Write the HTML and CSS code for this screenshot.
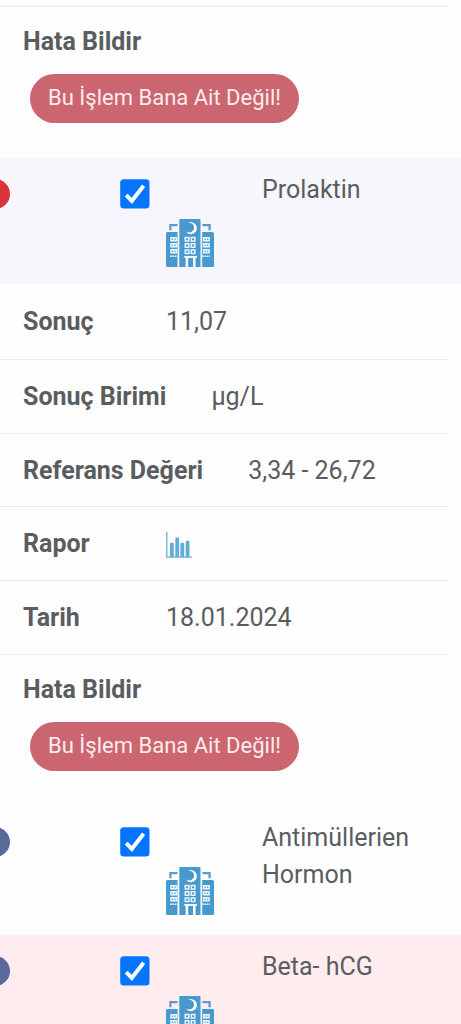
FILE: index.html
```html
<!DOCTYPE html>
<html lang="tr">
<head>
<meta charset="utf-8">
<meta name="viewport" content="width=device-width, initial-scale=1">
<title>Tahliller</title>
<link rel="stylesheet" href="styles.css">
</head>
<body>
<svg class="defs" width="0" height="0" aria-hidden="true">
  <symbol id="check" viewBox="0 0 30 30">
    <rect x=".2" y=".2" width="29.3" height="29.4" rx="3.6" fill="#0575ff"/>
    <path d="M6.2 16.2 11.8 22 23.6 6.8" fill="none" stroke="#fff" stroke-width="4"/>
  </symbol>
  <symbol id="hospital" viewBox="0 0 48 48">
    <g fill="#4799ce">
      <path d="M13.3 1.2Q13.3 0 14.5 0H33.3Q34.5 0 34.5 1.2V48H29.6V38.7H31V37H18.3V38.7H19.6V48H13.3Z"/>
      <path d="M22.2 39H27V48H22.2Z"/>
      <path d="M0 14.5Q0 13 1.5 13H11.5V48H1.5Q0 48 0 46.5Z"/>
      <path d="M36.2 13H46.5Q48 13 48 14.5V46.5Q48 48 46.5 48H36.2Z"/>
    </g>
    <path d="M4.4 11.3V6.2H11.5M43.6 11.3V6.2H36.4" fill="none" stroke="#5d9cc8" stroke-width="2.3"/>
    <path d="M22.2 3.8A6 6 0 1 1 19.8 12.2A4.9 4.9 0 1 0 22.2 3.8Z" fill="#fff"/>
    <g fill="#4799ce" stroke="#eef8ff" stroke-width="1.5">
      <path d="M19.3 18.6h3.5v3.5h-3.5zM25.3 18.6h3.5v3.5h-3.5zM19.3 24.8h3.5v3.5h-3.5zM25.3 24.8h3.5v3.5h-3.5zM19.3 31h3.5v3.5h-3.5zM25.3 31h3.5v3.5h-3.5z"/>
      <path d="M5 18.8h2.7v3H5zM7.7 18.8h2.7v3H7.7zM5 24.8h2.7v3H5zM7.7 24.8h2.7v3H7.7zM5 30.8h2.7v3H5zM7.7 30.8h2.7v3H7.7z"/>
      <path d="M37.7 18.8h2.7v3h-2.7zM40.4 18.8h2.7v3h-2.7zM37.7 24.8h2.7v3h-2.7zM40.4 24.8h2.7v3h-2.7zM37.7 30.8h2.7v3h-2.7zM40.4 30.8h2.7v3h-2.7z"/>
    </g>
    <path d="M4.2 37.2h7.3M36.3 37.2h7.6" stroke="#eef8ff" stroke-width="1.5" stroke-dasharray="1.6 .6"/>
  </symbol>
</svg>
<main class="results">
  <div class="top-edge"></div>
  <section class="report">
    <h2 class="label">Hata Bildir</h2>
    <button class="report-btn" type="button">Bu İşlem Bana Ait Değil!</button>
  </section>

  <div class="test test-shaded">
    <span class="dot dot-red"></span>
    <svg class="check"><use href="#check"/></svg>
    <svg class="hospital"><use href="#hospital"/></svg>
    <span class="name">Prolaktin</span>
  </div>

  <div class="field field-first"><span class="label">Sonuç</span><span class="value">11,07</span></div>
  <div class="field"><span class="label">Sonuç Birimi</span><span class="value value-unit">µg/L</span></div>
  <div class="field field-short"><span class="label">Referans Değeri</span><span class="value value-range">3,34 - 26,72</span></div>
  <div class="field"><span class="label">Rapor</span>
    <svg class="chart" viewBox="0 0 26 26">
      <path d="M.8 0V25.2H26" fill="none" stroke="#70add6" stroke-width="1.3"/>
      <path d="M4 25V12.2Q4 10.8 5.4 10.8H6.4Q7.8 10.8 7.8 12.2V25ZM9.3 25V7Q9.3 5.6 10.7 5.6H11.7Q13.1 5.6 13.1 7V25ZM14.4 25V12.2Q14.4 10.8 15.8 10.8H16.8Q18.2 10.8 18.2 12.2V25ZM19.7 25V10.2Q19.7 8.8 21.1 8.8H22.1Q23.5 8.8 23.5 10.2V25Z" fill="#63abd9"/>
    </svg>
  </div>
  <div class="field"><span class="label">Tarih</span><span class="value">18.01.2024</span></div>

  <section class="report">
    <h2 class="label">Hata Bildir</h2>
    <button class="report-btn" type="button">Bu İşlem Bana Ait Değil!</button>
  </section>

  <div class="test test-plain">
    <span class="dot"></span>
    <svg class="check"><use href="#check"/></svg>
    <svg class="hospital"><use href="#hospital"/></svg>
    <span class="name">Antimüllerien Hormon</span>
  </div>
  <div class="test test-alert">
    <span class="dot"></span>
    <svg class="check"><use href="#check"/></svg>
    <svg class="hospital"><use href="#hospital"/></svg>
    <span class="name">Beta- hCG</span>
  </div>
</main>
</body>
</html>
```
FILE: styles.css
```css
* { box-sizing: border-box; }
html, body { overflow: hidden; }
body {
  margin: 0;
  background: #fefefe;
  color: #5a5d60;
  font-family: Roboto, "Noto Sans", sans-serif;
  font-size: 25px;
  line-height: 37px;
}
.defs { display: block; }
.results { height: 1024px; overflow: hidden; }
.top-edge {
  width: 448px;
  height: 7px;
  border-bottom: 2px solid #f1f1f2;
}
.label {
  margin: 0;
  font-size: 25px;
  font-weight: 700;
  letter-spacing: 0;
}
.report {
  height: 151px;
  padding: 16px 0 0 23px;
}
.report-btn {
  display: block;
  width: 269px;
  height: 49px;
  margin: 14px 0 0 7px;
  padding: 0 0 2px;
  border: 0;
  border-radius: 25px;
  background: #cb656f;
  color: #feecec;
  font: 400 22px/46px Roboto, "Noto Sans", sans-serif;
  white-space: nowrap;
}
.test {
  display: grid;
  grid-template-columns: 119.5px 46px 96.5px 170px;
  grid-template-rows: 40px 50px;
  height: 126px;
  padding-top: 21px;
}
.test-shaded { background: #f7f6fc; }
.test-plain { height: 129px; }
.test-alert { background: #feecee; height: 130px; }
.dot {
  width: 30px;
  height: 30px;
  margin-left: -20px;
  border-radius: 50%;
  background: #576a99;
}
.dot-red { background: #d93438; }
.check { width: 30px; height: 30px; }
.hospital {
  grid-column: 3;
  grid-row: 2;
  width: 48px;
  height: 48px;
}
.name {
  grid-column: 4;
  grid-row: 1 / 3;
  margin-top: -8px;
}
.field {
  display: flex;
  align-items: center;
  width: 448px;
  height: 74px;
  padding: 0 0 0 23px;
  border-bottom: 1px solid #ececed;
}
.field-first { height: 76px; }
.field-short { height: 73px; }
.field .label { min-width: 143px; }
.value-unit, .value-range { margin-left: 45px; }
.field .label:has(+ .value-unit), .field .label:has(+ .value-range) { min-width: 0; }
.chart { width: 26px; height: 26px; margin-top: 2px; }
```
